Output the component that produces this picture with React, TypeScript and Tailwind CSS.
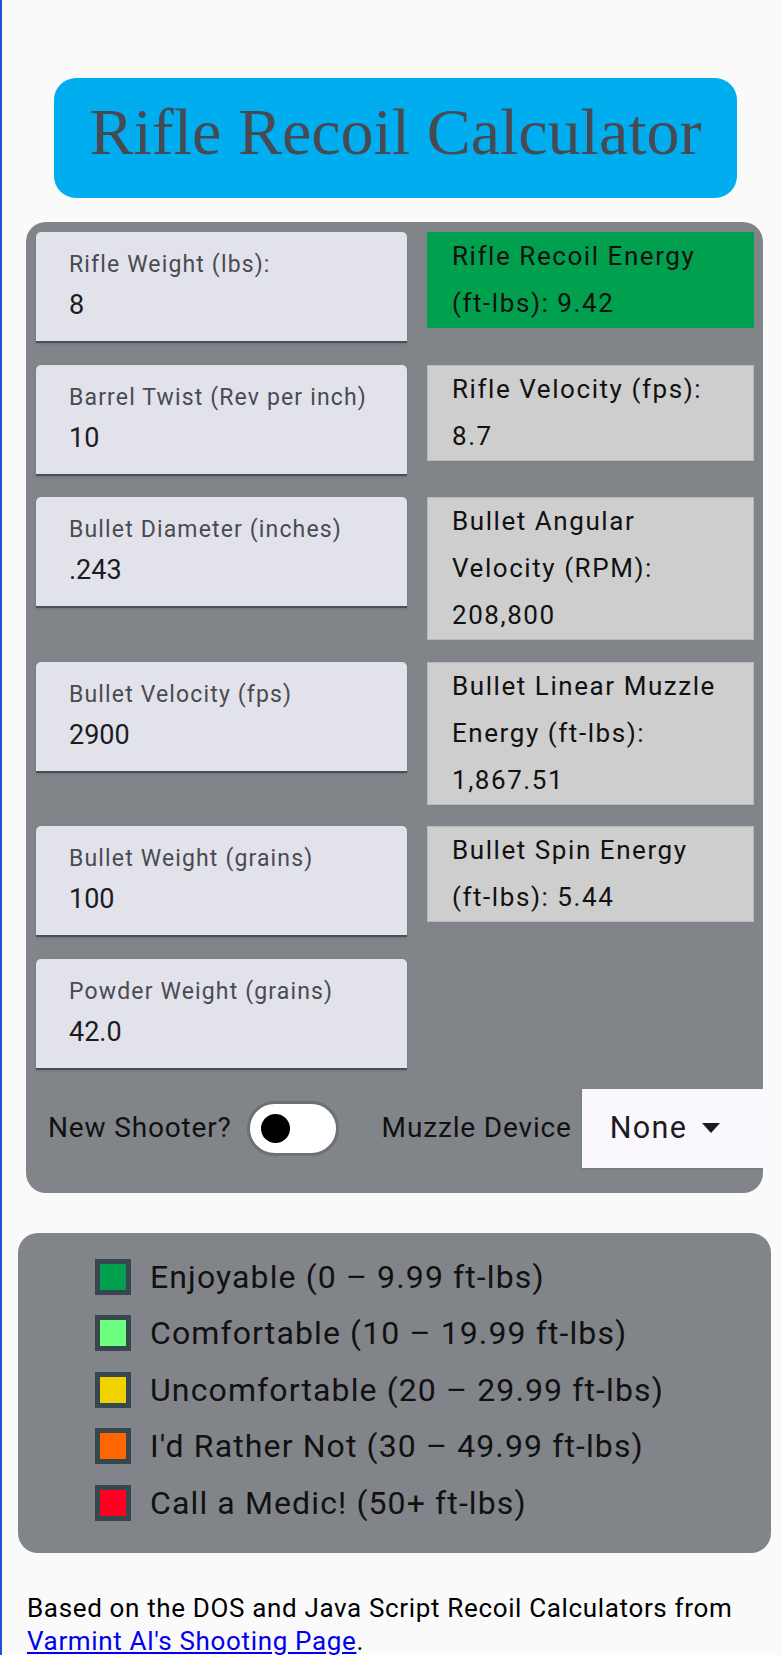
type Input = { label: string; value: string };
type Result = { lines: string[]; highlight?: boolean };

const inputs: Input[] = [
  { label: 'Rifle Weight (lbs):', value: '8' },
  { label: 'Barrel Twist (Rev per inch)', value: '10' },
  { label: 'Bullet Diameter (inches)', value: '.243' },
  { label: 'Bullet Velocity (fps)', value: '2900' },
  { label: 'Bullet Weight (grains)', value: '100' },
  { label: 'Powder Weight (grains)', value: '42.0' },
];

const results: Result[] = [
  { lines: ['Rifle Recoil Energy', '(ft-lbs): 9.42'], highlight: true },
  { lines: ['Rifle Velocity (fps):', '8.7'] },
  { lines: ['Bullet Angular', 'Velocity (RPM):', '208,800'] },
  { lines: ['Bullet Linear Muzzle', 'Energy (ft-lbs):', '1,867.51'] },
  { lines: ['Bullet Spin Energy', '(ft-lbs): 5.44'] },
];

const legend = [
  { color: 'bg-[#00a04e]', text: 'Enjoyable (0 – 9.99 ft-lbs)' },
  { color: 'bg-[#6eff7e]', text: 'Comfortable (10 – 19.99 ft-lbs)' },
  { color: 'bg-[#f0d200]', text: 'Uncomfortable (20 – 29.99 ft-lbs)' },
  { color: 'bg-[#ff6600]', text: "I'd Rather Not (30 – 49.99 ft-lbs)" },
  { color: 'bg-[#ff0022]', text: 'Call a Medic! (50+ ft-lbs)' },
];

function InputCard({ label, value }: Input) {
  return (
    <div className="h-[111px] rounded-t-[5px] bg-[#e2e2ea] border-b-2 border-[#4b4e57] pl-[33px] pt-[19px] shadow-sm">
      <div className="text-[23px] leading-[28px] tracking-[0.05em] text-[#4a4a53] whitespace-nowrap">{label}</div>
      <div className="mt-[10px] text-[27px] leading-[32px] text-[#1c1b1f]">{value}</div>
    </div>
  );
}

function ResultBox({ lines, highlight }: Result) {
  return (
    <div
      className={
        highlight
          ? 'border border-[#00a04e] bg-[#00a04e] pl-[24px] text-[26px] leading-[47px] tracking-[0.06em] text-[#111]'
          : 'border border-[#b8b8b8] bg-[#cecece] pl-[24px] text-[26px] leading-[47px] tracking-[0.06em] text-[#111]'
      }
    >
      {lines.map((l) => (
        <div key={l} className="whitespace-nowrap">
          {l}
        </div>
      ))}
    </div>
  );
}

export default function App() {
  return (
    <div className="min-h-screen w-[783px] bg-[#fafafa] border-l-2 border-[#2352d1] pt-[78px] font-['Roboto',sans-serif] overflow-hidden">
      <div className="ml-[52px] w-[683px] h-[120px] rounded-[22px] bg-[#00aeef] flex items-center justify-center pb-[14px]">
        <h1 className="font-['Liberation_Serif',serif] text-[66px] text-[#474a52]">Rifle Recoil Calculator</h1>
      </div>

      <div className="mt-[24px] ml-[24px] w-[737px] rounded-[20px] bg-[#818489] pt-[10px] pl-[10px] pr-[9px] pb-[25px] overflow-hidden">
        <div className="grid grid-cols-[371px_327px] gap-x-[20px] gap-y-[21.5px] items-start">
          {inputs.map((inp, i) => [
            <InputCard key={inp.label} {...inp} />,
            results[i] ? <ResultBox key={results[i].lines[0]} {...results[i]} /> : <div key="empty" />,
          ])}
        </div>

        <div className="mt-[19px] flex items-center h-[79px] pl-[12px] text-[28px] tracking-[0.03em] text-[#111]">
          <span className="whitespace-nowrap">New Shooter?</span>
          <div className="ml-[15px] w-[92px] h-[55px] rounded-full border-[3px] border-[#6c7077] bg-white flex items-center pl-[11px]">
            <div className="w-[29px] h-[29px] rounded-full bg-black" />
          </div>
          <span className="ml-[43px] whitespace-nowrap">Muzzle Device</span>
          <div className="ml-[10px] -mr-[9px] flex-1 h-[79px] bg-[#faf8fe] shadow-sm flex items-center pl-[28px]">
            <span className="text-[30.5px] tracking-[0.045em] text-[#1c1b1f]">None</span>
            <svg className="ml-[15px]" width="18" height="10" viewBox="0 0 18 10">
              <path d="M0 0 L18 0 L9 10 Z" fill="#1c1b1f" />
            </svg>
          </div>
        </div>
      </div>

      <div className="mt-[40px] ml-[16px] w-[753px] h-[320px] rounded-[20px] bg-[#818489] pt-[26px] pl-[77px] flex flex-col gap-[20.6px]">
        {legend.map((item) => (
          <div key={item.text} className="flex items-center h-[36px]">
            <div className={`w-[36px] h-[36px] border-[5px] border-[#37474f] ${item.color}`} />
            <span className="ml-[19px] text-[32px] tracking-[0.035em] text-[#111] whitespace-nowrap">{item.text}</span>
          </div>
        ))}
      </div>

      <p className="mt-[39px] pl-[25px] text-[26px] leading-[33px] tracking-[0.025em] text-black">
        Based on the DOS and Java Script Recoil Calculators from
        <br />
        <a href="#" className="text-[#0000ee] underline">
          Varmint Al's Shooting Page
        </a>
        .
      </p>
    </div>
  );
}
